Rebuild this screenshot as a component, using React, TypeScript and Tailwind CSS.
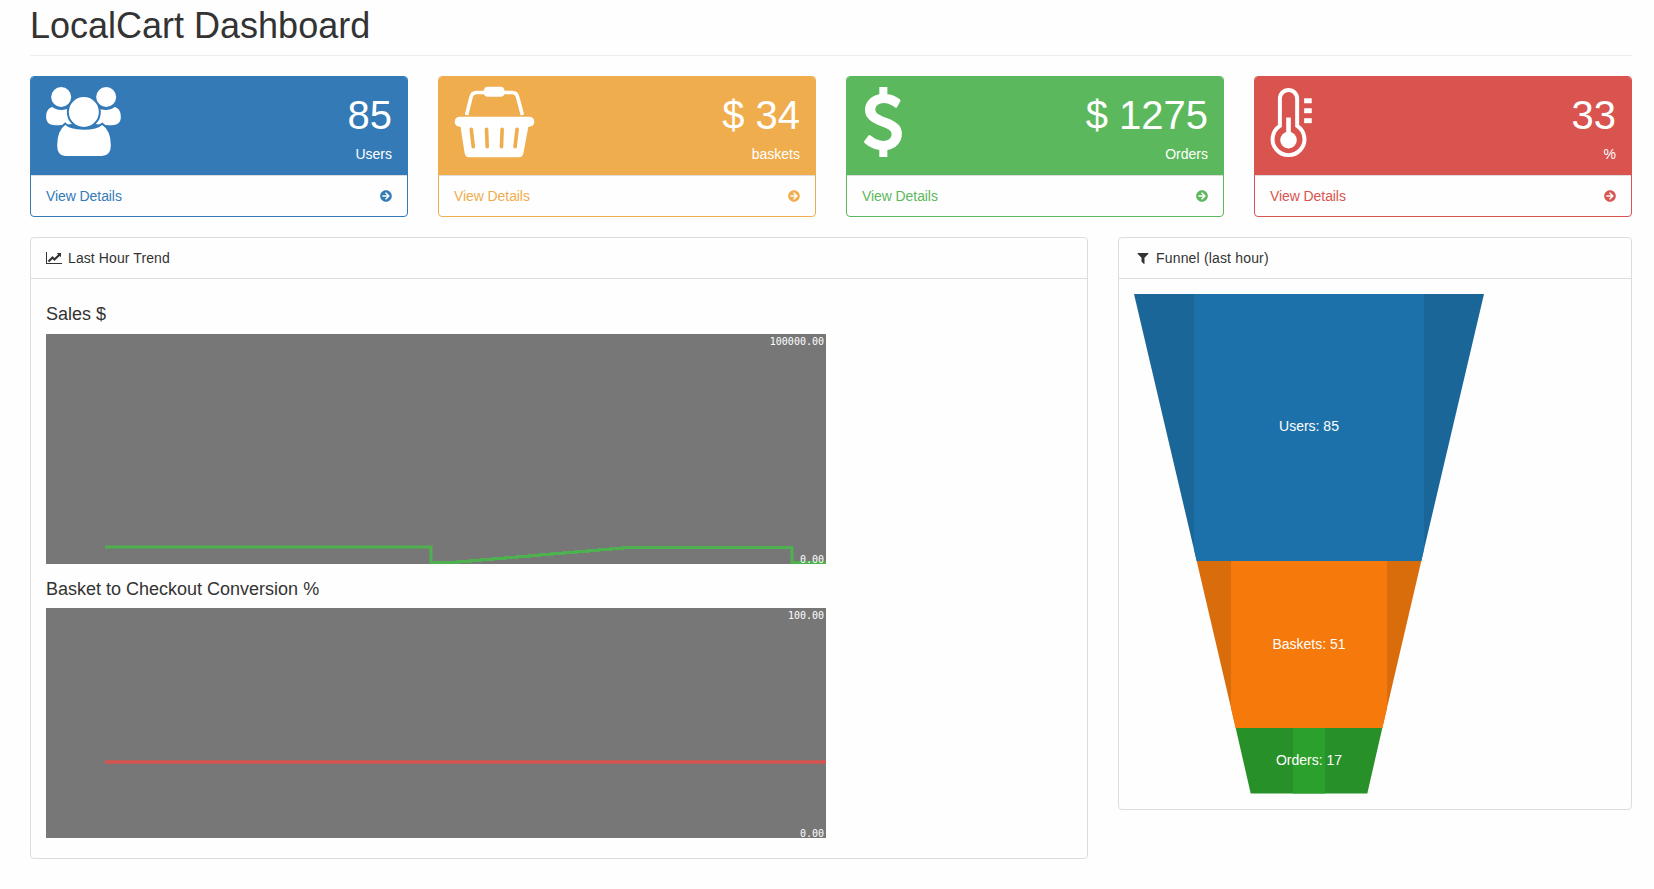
import React from "react";
import { FaArrowCircleRight } from "react-icons/fa";

const UsersIcon = () => (
  <svg viewBox="48 50 224 210" className="block w-[75px] h-[70px]">
    <circle cx="93" cy="80" r="30" fill="#fff" />
    <circle cx="228" cy="80" r="30" fill="#fff" />
    <path d="M48 140C48 122 55 113 66 110C82 122 105 122 122 110L135 160L85 165C60 165 48 160 48 140Z" fill="#fff" />
    <path d="M272 140C272 122 265 113 254 110C238 122 215 122 198 110L185 160L235 165C260 165 272 160 272 140Z" fill="#fff" />
    <path d="M78 225C78 190 88 172 105 160C125 180 195 180 216 160C235 172 245 195 245 225C245 250 235 260 215 260L105 260C90 260 78 250 78 225Z" fill="#fff" stroke="#337ab7" strokeWidth="6" />
    <circle cx="161" cy="125" r="48" fill="#fff" stroke="#337ab7" strokeWidth="6" />
  </svg>
);

const BasketIcon = () => (
  <svg viewBox="40 48 244 216" className="block w-[81px] h-[72px] -mt-px">
    <path d="M78 135L91 82Q94 67 108 67L215 67Q229 67 232 82L246 135" fill="none" stroke="#fff" strokeWidth="11" />
    <rect x="130" y="50" width="62" height="30" rx="12" fill="#fff" />
    <path d="M58 160L266 160L249 250Q247 262 235 262L85 262Q75 262 72 250Z" fill="#fff" />
    <rect x="42" y="140" width="240" height="30" rx="15" fill="#fff" />
    <path d="M92 178L98 230M138 178L140 230M185 178L183 230M230 178L224 230" stroke="#f0ad4e" strokeWidth="11" strokeLinecap="round" />
  </svg>
);

const DollarIcon = () => (
  <svg viewBox="430 32 932 1728" className="block w-[38px] h-[70px] ml-[2px]" fill="#fff">
    <path d="M1362 1185q0 153-99.5 263.5t-258.5 136.5v175q0 14-9 23t-23 9h-135q-13 0-22.5-9.5t-9.5-22.5v-175q-66-9-127.5-31t-101.5-44.5-74-48-46.5-37.5-17.5-18q-17-21-2-41l103-135q7-10 23-12 15-2 24 9l2 2q113 99 243 125 37 8 74 8 81 0 142.5-43t61.5-122q0-28-15-53t-33.5-42-58.5-37.5-66-32-80-32.5q-39-16-61.5-25t-61.5-26.5-62.5-31-56.5-35.5-53.5-42.5-43.5-49-35.5-58-21-66.5-8.5-78q0-138 98-242t255-134v-180q0-13 9.5-22.5t22.5-9.5h135q14 0 23 9t9 23v176q57 6 110.5 23t87 33.5 63.5 37.5 39 29 15 14q17 18 5 38l-81 146q-8 15-23 16-14 3-27-7-3-3-14.5-12t-39-26.5-58.5-32-74.5-26-85.5-11.5q-95 0-155 43t-60 111q0 26 8.5 48t29.5 41.5 39.5 33 56 31 60.5 27 70 27.5q53 20 81 31.5t76 35 75.5 42.5 62 50 53 63.5 31.5 76.5 13 94z" />
  </svg>
);

const ThermoIcon = () => (
  <svg viewBox="40 33 128 214" className="block w-[43px] h-[71px]">
    <path d="M69 150V68A26 26 0 0 1 121 68V150A48 48 0 1 1 69 150Z" fill="none" stroke="#fff" strokeWidth="12" />
    <rect x="88" y="125" width="14" height="70" fill="#fff" />
    <circle cx="95" cy="193" r="25" fill="#fff" />
    <rect x="142" y="67" width="23" height="15" fill="#fff" />
    <rect x="142" y="97" width="23" height="15" fill="#fff" />
    <rect x="142" y="127" width="23" height="15" fill="#fff" />
  </svg>
);

const LineChartIcon = () => (
  <svg viewBox="0 0 2048 1792" className="block w-4 h-[14px]" fill="#333">
    <path d="M2048 1536v128h-2048v-1536h128v1408h1920zm-128-1248v435q0 21-19.5 29.5t-35.5-7.5l-121-121-633 633q-10 10-23 10t-23-10l-233-233-416 416-192-192 585-585q10-10 23-10t23 10l233 233 464-464-121-121q-16-16-7.5-35.5t29.5-19.5h435q14 0 23 9t9 23z" />
  </svg>
);

const FilterIcon = () => (
  <svg viewBox="0 0 1792 1792" className="block w-[14px] h-[14px] mx-auto" fill="#333">
    <path d="M1595 295q17 41-14 70l-493 493v742q0 42-39 59-13 5-25 5-27 0-45-19l-256-256q-19-19-19-45v-486l-493-493q-31-29-14-70 17-39 59-39h1280q42 0 59 39z" />
  </svg>
);

const cards = [
  { icon: <UsersIcon />, value: "85", label: "Users", border: "border-[#337ab7]", bg: "bg-[#337ab7]", text: "text-[#337ab7]" },
  { icon: <BasketIcon />, value: "$ 34", label: "baskets", border: "border-[#f0ad4e]", bg: "bg-[#f0ad4e]", text: "text-[#f0ad4e]" },
  { icon: <DollarIcon />, value: "$ 1275", label: "Orders", border: "border-[#5cb85c]", bg: "bg-[#5cb85c]", text: "text-[#5cb85c]" },
  { icon: <ThermoIcon />, value: "33", label: "%", border: "border-[#d9534f]", bg: "bg-[#d9534f]", text: "text-[#d9534f]" },
];

function rampPath() {
  let d = "M105 547H431V562.5H446";
  const steps = 15;
  const stepW = (623 - 446) / steps;
  for (let i = 1; i <= steps; i++) {
    d += `H${(446 + stepW * i).toFixed(0)}V${562.5 - i}`;
  }
  d += "H792V562.5H826";
  return d;
}

const Chart = ({ max, children }: { max: string; children: React.ReactNode }) => (
  <div className="relative w-[780px] h-[230px] bg-[#777777]">
    <svg viewBox="46 0 780 230" className="absolute inset-0 w-full h-full">{children}</svg>
    <span className="absolute right-[2px] top-[2px] text-[10px] leading-[12px] text-white font-['DejaVu_Sans_Mono',monospace]">{max}</span>
    <span className="absolute right-[2px] bottom-[-2px] text-[10px] leading-[12px] text-white font-['DejaVu_Sans_Mono',monospace]">0.00</span>
  </div>
);

const Funnel = () => (
  <svg viewBox="0 0 350 500" className="block w-[350px] h-[500px]">
    <polygon points="0,0 350,0 287.3,267 62.7,267" fill="#1b6699" />
    <polygon points="60,0 290,0 290,255 287.3,267 62.7,267 60,255" fill="#1d71ab" />
    <polygon points="62.7,267 287.3,267 248.3,434 101.7,434" fill="#d96d0b" />
    <polygon points="97,267 253,267 253,414 248.3,434 101.7,434 97,414" fill="#f5790b" />
    <polygon points="101.7,434 248.3,434 233.3,499.5 116.7,499.5" fill="#289028" />
    <rect x="159" y="434" width="32" height="65.5" fill="#2ca02c" />
    <text x="175" y="137" textAnchor="middle" fill="#fff" fontSize="14">Users: 85</text>
    <text x="175" y="355" textAnchor="middle" fill="#fff" fontSize="14">Baskets: 51</text>
    <text x="175" y="471" textAnchor="middle" fill="#fff" fontSize="14">Orders: 17</text>
  </svg>
);

export default function App() {
  return (
    <div className="min-h-[889px] w-[1654px] bg-[#fefefe] font-['Liberation_Sans',Arial,sans-serif] text-[14px] leading-[20px] text-[#333]">
      <div className="w-[1632px] pl-[30px] pt-[6px]">
        <h1 className="text-[36px] leading-[40px] font-normal pb-[9px] border-b border-[#eeeeee] mb-5">LocalCart Dashboard</h1>

        <div className="grid grid-cols-4 gap-[30px] mb-5">
          {cards.map((c) => (
            <div key={c.label} className={`border rounded ${c.border} overflow-hidden`}>
              <div className={`${c.bg} text-white px-[15px] pt-[10px] pb-[11px] flex justify-between items-start`}>
                <div>{c.icon}</div>
                <div className="text-right">
                  <div className="text-[40px] leading-[57px]">{c.value}</div>
                  <div>{c.label}</div>
                </div>
              </div>
              <div className={`flex justify-between items-center px-[15px] py-[10px] border-t border-[#dddddd] ${c.text}`}>
                <span className="tracking-[-0.08px]">View Details</span>
                <FaArrowCircleRight className="w-3 h-3" />
              </div>
            </div>
          ))}
        </div>

        <div className="flex gap-[30px] items-start">
          <div className="w-[1058px] border border-[#dddddd] rounded">
            <div className="flex items-center px-[15px] py-[10px] border-b border-[#dddddd]">
              <span className="w-[18px] mr-1"><LineChartIcon /></span>
              <span className="tracking-[0.1px]">Last Hour Trend</span>
            </div>
            <div className="p-[15px]">
              <h4 className="text-[18px] leading-[20px] font-normal my-[10px]">Sales $</h4>
              <Chart max="100000.00">
                <path d={rampPath()} transform="translate(0,-334)" fill="none" stroke="#4fb04f" strokeWidth="3" />
              </Chart>
              <h4 className="text-[18px] leading-[20px] font-normal mt-[15px] mb-[9px]">Basket to Checkout Conversion %</h4>
              <Chart max="100.00">
                <rect x="105" y="152.3" width="721" height="3.4" fill="#d9534f" />
              </Chart>
              <div className="h-[5px]" />
            </div>
          </div>

          <div className="w-[514px] border border-[#dddddd] rounded">
            <div className="flex items-center px-[15px] py-[10px] border-b border-[#dddddd]">
              <span className="w-[18px] mr-1"><FilterIcon /></span>
              <span className="tracking-[0.17px]">Funnel (last hour)</span>
            </div>
            <div className="p-[15px]">
              <Funnel />
            </div>
          </div>
        </div>
      </div>
    </div>
  );
}
